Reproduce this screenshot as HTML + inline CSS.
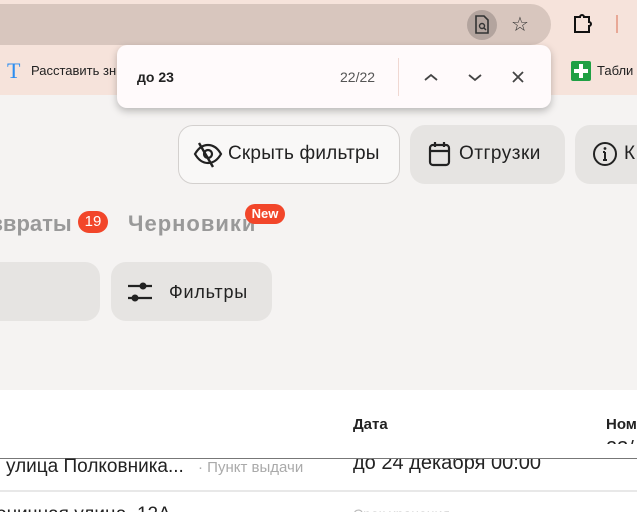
<!DOCTYPE html>
<html><head><meta charset="utf-8"><style>
*{margin:0;padding:0;box-sizing:border-box}
html,body{width:637px;height:512px;overflow:hidden}
body{background:#f5f3f2;font-family:"Liberation Sans","DejaVu Sans",sans-serif;position:relative;color:#222}
.a{position:absolute;white-space:nowrap}
</style></head><body>
<div class="a" style="left:0;top:0;width:637px;height:95px;background:#f6e3db"></div>
<div class="a" style="left:-20px;top:4px;width:571px;height:41px;background:#d8c6be;border-radius:21px"></div>
<div class="a" style="left:467px;top:10px;width:30px;height:30px;border-radius:50%;background:#b3a49e"></div>
<svg class="a" style="left:474px;top:15px" width="16" height="20" viewBox="0 0 16 20"><path d="M2 1h8l4 4v13H2z" fill="none" stroke="#333" stroke-width="1.6"/><circle cx="8" cy="11" r="2.5" fill="none" stroke="#333" stroke-width="1.4"/><path d="M10 13l2 2" stroke="#333" stroke-width="1.4"/></svg>
<div class="a" style="left:511px;top:12px;font-size:20px;color:#333">☆</div>
<svg class="a" style="left:572px;top:13px" width="24" height="22" viewBox="0 0 24 22"><path d="M3 4h5a2 2 0 0 1 4 0h5v5a2 2 0 0 1 0 4v6H3z" fill="none" stroke="#111" stroke-width="2"/></svg>
<div class="a" style="left:616px;top:15px;width:2px;height:18px;background:#e8a896"></div>
<div class="a" style="left:7px;top:58px;font-family:'Liberation Serif',serif;font-size:22px;color:#2c8df0">T</div>
<div class="a" style="left:31px;top:63px;font-size:13px;color:#222">Расставить зн</div>
<div class="a" style="left:571px;top:61px;width:20px;height:20px;background:#1fa044;border-radius:2px"></div>
<div class="a" style="left:579px;top:64px;width:4px;height:14px;background:#fff"></div>
<div class="a" style="left:574px;top:69px;width:14px;height:4px;background:#fff"></div>
<div class="a" style="left:597px;top:63px;font-size:13px">Табли</div>
<div class="a" style="left:117px;top:45px;width:434px;height:63px;background:#fffafb;border-radius:10px;box-shadow:0 3px 8px rgba(0,0,0,.25)"></div>
<div class="a" style="left:137px;top:69px;font-size:14px;font-weight:bold">до 23</div>
<div class="a" style="left:340px;top:69px;font-size:14px;color:#555">22/22</div>
<div class="a" style="left:398px;top:58px;width:1px;height:38px;background:#f0d8d2"></div>
<svg class="a" style="left:422px;top:69px" width="110" height="16" viewBox="0 0 110 16"><path d="M3 11l6-5 6 5M47 6l6 5 6-5M91 3l10 10M101 3L91 13" fill="none" stroke="#444" stroke-width="1.8"/></svg>
<div class="a" style="left:178px;top:125px;width:222px;height:59px;border:1px solid #d3d0ce;border-radius:15px;background:#f9f8f7"></div>
<svg class="a" style="left:193px;top:140px" width="30" height="30" viewBox="0 0 30 30"><path d="M2 14c4-7 9-9 13-9s9 2 13 9c-4 7-9 9-13 9s-9-2-13-9z" fill="none" stroke="#222" stroke-width="2.2"/><circle cx="15" cy="14" r="4" fill="none" stroke="#222" stroke-width="2.2"/><path d="M6 3l14 24" stroke="#222" stroke-width="2.4"/></svg>
<div class="a" style="left:228px;top:143px;font-size:19px;letter-spacing:.2px">Скрыть фильтры</div>
<div class="a" style="left:410px;top:125px;width:155px;height:59px;border-radius:15px;background:#e6e4e2"></div>
<svg class="a" style="left:428px;top:140px" width="24" height="28" viewBox="0 0 24 28"><rect x="2" y="5" width="19" height="20" rx="3" fill="none" stroke="#222" stroke-width="2.2"/><path d="M2 11h19M7 2v5M16 2v5" stroke="#222" stroke-width="2.2"/></svg>
<div class="a" style="left:459px;top:143px;font-size:19px;letter-spacing:.5px">Отгрузки</div>
<div class="a" style="left:575px;top:125px;width:80px;height:59px;border-radius:15px;background:#e6e4e2"></div>
<svg class="a" style="left:592px;top:141px" width="26" height="26" viewBox="0 0 26 26"><circle cx="13" cy="13" r="11" fill="none" stroke="#222" stroke-width="2"/><path d="M13 11v8M11 19h4M11 11h2" stroke="#222" stroke-width="2"/><circle cx="13" cy="7.5" r="1.4" fill="#222"/></svg>
<div class="a" style="left:624px;top:143px;font-size:19px">К</div>
<div class="a" style="left:-8px;top:211px;font-size:22px;font-weight:bold;color:#999">звраты</div>
<div class="a" style="left:78px;top:211px;width:30px;height:22px;border-radius:11px;background:#f2462a;color:#fff;font-size:15px;text-align:center;line-height:22px">19</div>
<div class="a" style="left:128px;top:211px;font-size:22px;font-weight:bold;color:#999;letter-spacing:1px">Черновики</div>
<div class="a" style="left:245px;top:204px;width:40px;height:20px;border-radius:10px;background:#f2462a;color:#fff;font-size:13px;font-weight:bold;text-align:center;line-height:20px">New</div>
<div class="a" style="left:-20px;top:262px;width:120px;height:59px;border-radius:15px;background:#e6e4e2"></div>
<div class="a" style="left:111px;top:262px;width:161px;height:59px;border-radius:15px;background:#e6e4e2"></div>
<svg class="a" style="left:127px;top:280px" width="26" height="24" viewBox="0 0 26 24"><path d="M1 6h24M1 18h24" stroke="#222" stroke-width="2.2"/><circle cx="16" cy="6" r="3.5" fill="#222"/><circle cx="8" cy="18" r="3.5" fill="#222"/></svg>
<div class="a" style="left:169px;top:282px;font-size:18px;letter-spacing:.8px">Фильтры</div>
<div class="a" style="left:0;top:390px;width:637px;height:122px;background:#fff"></div>
<div class="a" style="left:353px;top:416px;font-size:15px;font-weight:bold">Дата</div>
<div class="a" style="left:606px;top:416px;font-size:15px;font-weight:bold">Ном</div>
<div class="a" style="left:353px;top:452px;font-size:20px">до 24 декабря 00:00</div>
<div class="a" style="left:606px;top:438px;font-size:20px">23/</div>
<div class="a" style="left:0;top:444px;width:637px;height:14px;background:#fff"></div>
<div class="a" style="left:0;top:458px;width:637px;height:1px;background:#777"></div>
<div class="a" style="left:6px;top:456px;font-size:19px">улица Полковника...</div>
<div class="a" style="left:198px;top:459px;font-size:15px;color:#aaa">· Пункт выдачи</div>
<div class="a" style="left:0;top:490px;width:637px;height:2px;background:#e8e8e8"></div>
<div class="a" style="left:-4px;top:504px;font-size:19px">оничная улица, 12А</div>
<div class="a" style="left:353px;top:506px;font-size:14px;color:#bbb">Срок хранения</div>
</body></html>
